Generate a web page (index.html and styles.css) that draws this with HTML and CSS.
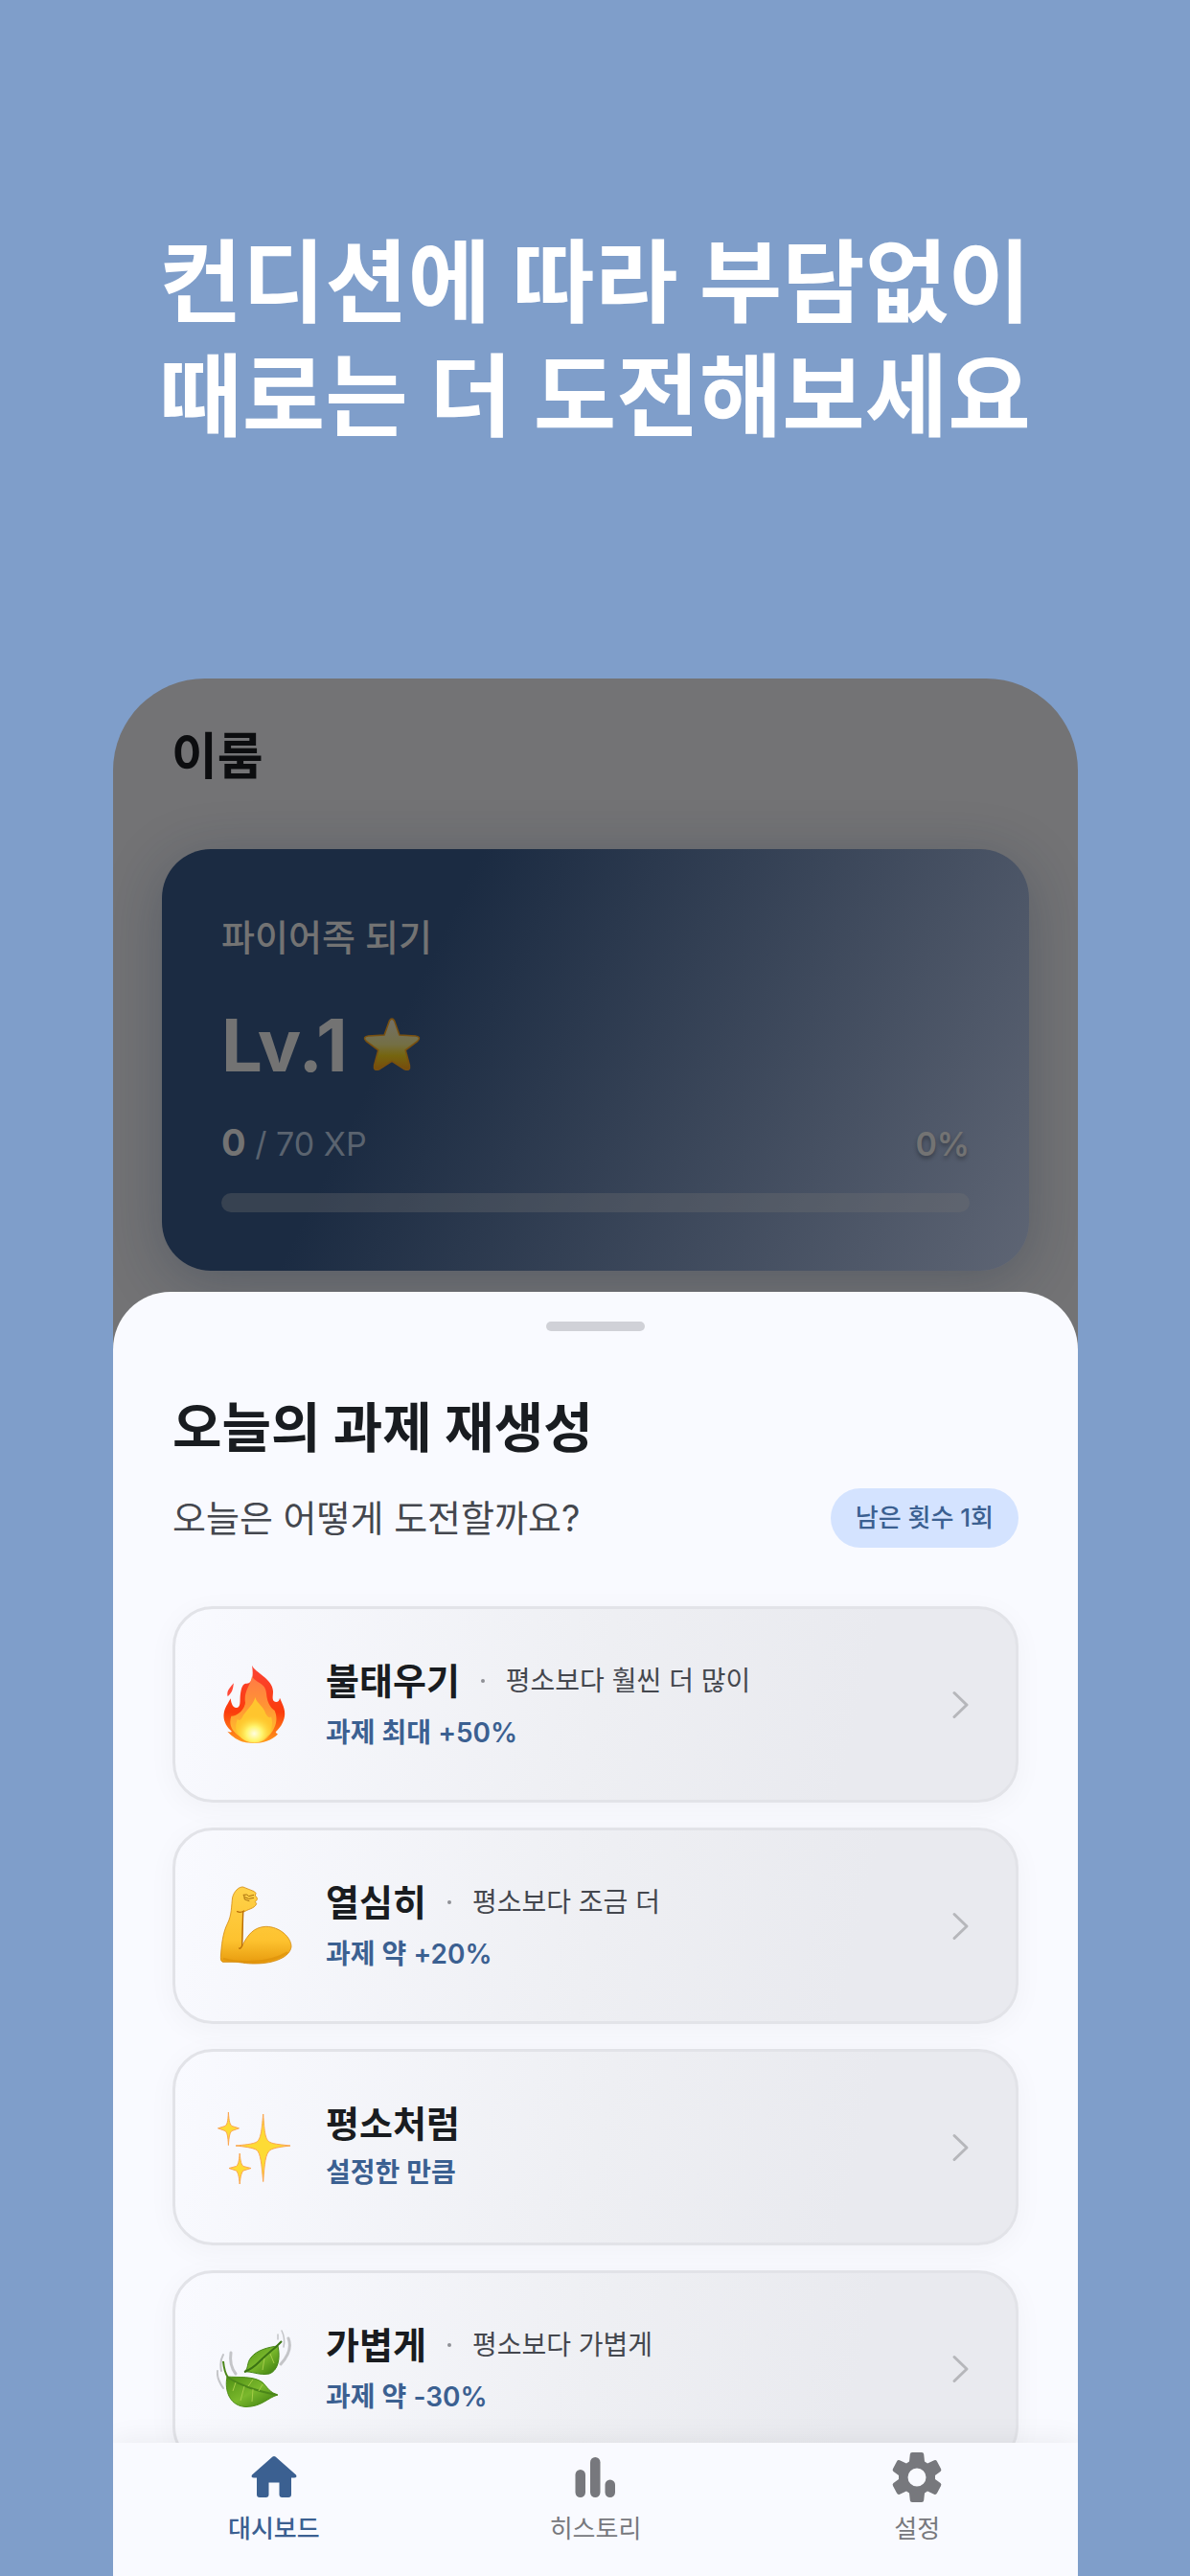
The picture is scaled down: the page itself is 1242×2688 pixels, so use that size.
FILE: index.html
```html
<!DOCTYPE html>
<html lang="ko">
<head>
<meta charset="utf-8">
<meta name="viewport" content="width=device-width, initial-scale=1">
<title>이룸</title>
<link rel="stylesheet" href="styles.css">
</head>
<body>
<main class="page">
  <h1 class="headline">컨디션에 따라 부담없이<br>때로는 더 도전해보세요</h1>

  <div class="phone">
    <section class="dashboard">
      <h2 class="app-name">이룸</h2>
      <article class="level-card">
        <p class="goal">파이어족 되기</p>
        <p class="level">Lv.1
          <svg class="star" viewBox="0 0 57 53" aria-hidden="true">
            <defs><linearGradient id="star" x1="0" y1="0" x2="0" y2="1"><stop offset="0" stop-color="#737068"/><stop offset=".5" stop-color="#746f45"/><stop offset=".72" stop-color="#75650f"/><stop offset="1" stop-color="#774b0c"/></linearGradient></defs>
            <path d="M26 3Q28.500 -1 31 3L36 17L52 18Q58 19 54 23L42 32L46 47Q47 53 41 51L28.500 43L16 51Q10 53 11 47L15 32L3 23Q-1 19 5 18L21 17Z" fill="url(#star)" stroke="#79500f" stroke-width="1.500"/>
          </svg>
        </p>
        <div class="xp-row">
          <p class="xp"><strong>0</strong> / 70 XP</p>
          <p class="percent">0%</p>
        </div>
        <div class="track"></div>
      </article>
    </section>

    <section class="sheet">
      <div class="handle"></div>
      <h2 class="sheet-title">오늘의 과제 재생성</h2>
      <div class="sheet-sub">
        <p class="question">오늘은 어떻게 도전할까요?</p>
        <span class="badge">남은 횟수 1회</span>
      </div>

      <div class="options">
        <button class="option" type="button">
          <svg class="emoji" viewBox="33 43 240 264" aria-hidden="true">
            <defs>
              <linearGradient id="fire" x1="0" y1="0" x2="0" y2="1"><stop offset="0" stop-color="#fb4335"/><stop offset=".6" stop-color="#fb3c0c"/><stop offset="1" stop-color="#ff9a1c"/></linearGradient>
              <linearGradient id="fire-mid" x1="0" y1="0" x2="0" y2="1"><stop offset="0" stop-color="#ff7a45"/><stop offset=".5" stop-color="#ff9633"/><stop offset="1" stop-color="#ffc72c"/></linearGradient>
              <radialGradient id="fire-core" cx=".5" cy=".72" r=".55"><stop offset="0" stop-color="#fffde0"/><stop offset=".4" stop-color="#fff56e"/><stop offset="1" stop-color="#ffd02c" stop-opacity="0"/></radialGradient>
            </defs>
            <path d="M144 51C154 75 208 92 210 132C210 148 206 158 213 164C222 170 230 163 231 153C240 174 249 190 246 211C242 233 231 248 218 260Q221 267 226 266C205 287 178 295 150 295C113 295 88 281 67 258Q76 262 81 259C63 242 53 224 56 202C58 184 68 173 77 155C79 173 85 184 95 184C109 184 106 164 107 149C109 129 112 111 124 108Q133 110 139 103C148 91 147 70 144 51Z" fill="url(#fire)"/>
            <path d="M87 107C84 119 87 132 68 149C64 133 71 125 87 107Z" fill="#ff4938"/>
            <path d="M144 86C155 107 187 105 189 139C191 164 199 182 215 193C228 223 215 249 202 266C174 288 126 291 98 269C76 248 72 232 79 210C96 211 120 193 123 168C117 133 139 116 144 86Z" fill="url(#fire-mid)"/>
            <path d="M154 151C158 170 181 179 187 203C194 216 202 218 204 211C217 253 187 292 151 292C112 292 80 261 99 219C105 229 112 218 116 209C127 191 148 175 154 151Z" fill="#ffc52e"/>
            <ellipse cx="151" cy="242" rx="57" ry="52" fill="url(#fire-core)"/>
          </svg>
          <span class="option-text">
            <span class="option-line has-note"><strong class="option-name">불태우기</strong><i class="dot"></i><span class="note">평소보다 훨씬 더 많이</span></span>
            <span class="amount">과제 최대 +50%</span>
          </span>
          <svg class="chevron" viewBox="0 0 20 32" aria-hidden="true"><path d="M4 3.500L17 16L4 28.500"/></svg>
        </button>

        <button class="option" type="button">
          <svg class="emoji" viewBox="33 735 240 264" aria-hidden="true">
            <defs><linearGradient id="arm" x1="0" y1="0" x2="0" y2="1"><stop offset="0" stop-color="#ffd24a"/><stop offset=".7" stop-color="#fdc22f"/><stop offset="1" stop-color="#e79a0d"/></linearGradient></defs>
            <path d="M83 776C88 758 102 743 116 744L151 758Q160 763 154 771L160 778Q162 785 154 790L158 797C151 813 132 812 116 824L113 929C131 893 150 869 188 868C230 868 267 901 267 931C263 963 215 984 153 984C126 985 102 978 87 979L52 979Q45 976 46 965C48 928 53 886 67 859C81 832 79 804 83 776Z" fill="url(#arm)" stroke="#d58b12" stroke-width="2.500"/>
            <path d="M116 769L128 768L134 773L150 769M121 776L134 781L150 778M119 770L121 783L136 788" fill="none" stroke="#a8700f" stroke-width="3" stroke-linejoin="round"/>
            <path d="M116 824L113 928Q108 939 104 936M98 821Q108 826 119 819" fill="none" stroke="#b86d08" stroke-width="4" stroke-linecap="round"/>
            <path d="M57 969C91 980 193 988 253 950" fill="none" stroke="#d98c08" stroke-width="7" stroke-linecap="round" opacity=".55"/>
          </svg>
          <span class="option-text">
            <span class="option-line has-note"><strong class="option-name">열심히</strong><i class="dot"></i><span class="note">평소보다 조금 더</span></span>
            <span class="amount">과제 약 +20%</span>
          </span>
          <svg class="chevron" viewBox="0 0 20 32" aria-hidden="true"><path d="M4 3.500L17 16L4 28.500"/></svg>
        </button>

        <button class="option" type="button">
          <svg class="emoji" viewBox="0 0 80 88" aria-hidden="true">
            <g fill="#fddb35" stroke="#fba650" stroke-width="1" stroke-linejoin="round">
              <path d="M48.700 9C50 29 51 36 56 38.500C60 40.500 69 41 77 42C69 43 60 44 56 46.500C51 50 50 61 48.700 79.500C47 61 46 50 42 46.500C38 44 29 43 20 42C29 41 38 40.500 42 38C46 35 47 28 48.700 9Z"/>
              <path d="M12.400 7C13 17 14 20 16 21.500L23.500 23.800L16 26.500C14 28 13 32 12.400 41.500C12 32 11 28 9 26.500L1.500 23.800L9 21.500C11 20 12 17 12.400 7Z"/>
              <path d="M24.200 50C25 59 26 62 28 63.500L36 65.500L28 68C26 70 25 74 24.200 82C23.500 74 22.500 70 20.500 68L13 65.500L20.500 63.500C22.500 62 23.500 59 24.200 50Z"/>
            </g>
          </svg>
          <span class="option-text">
            <span class="option-line"><strong class="option-name">평소처럼</strong></span>
            <span class="amount">설정한 만큼</span>
          </span>
          <svg class="chevron" viewBox="0 0 20 32" aria-hidden="true"><path d="M4 3.500L17 16L4 28.500"/></svg>
        </button>

        <button class="option" type="button">
          <svg class="emoji" viewBox="0 0 80 88" aria-hidden="true">
            <defs><linearGradient id="leaf" x1="0" y1="0" x2="1" y2="1"><stop offset="0" stop-color="#4f9014"/><stop offset=".5" stop-color="#7ab82c"/><stop offset="1" stop-color="#37790c"/></linearGradient></defs>
            <g fill="none" stroke="#c4c5c8" stroke-linecap="round">
              <path d="M1 46Q0 54 7 64M7 29Q3 36 5 46" stroke-width="2"/>
              <path d="M15 27Q13 40 20 49" stroke-width="3"/>
              <path d="M75 12Q80 25 67 39" stroke-width="3"/>
              <path d="M68 4Q72 12 70 21M64 8V13" stroke-width="1.500"/>
            </g>
            <path d="M64 20C55 21 42 24 36 32C31 38 34 43 29 47C37 46 44 51 55 49C64 46 67 33 64 20Z" fill="url(#leaf)" stroke="#458617"/>
            <path d="M68 15L62 21Q51 30 44 37T29 47" fill="none" stroke="#3b7314" stroke-width="2"/>
            <path d="M11 52C22 53 39 51 48 58C53 63 56 69 64 71C53 74 48 83 31 83.500C14 83 8 67 11 52Z" fill="url(#leaf)" stroke="#4e8d17"/>
            <path d="M7 36Q8 47 12 53Q31 65 63 71" fill="none" stroke="#4b861a" stroke-width="2"/>
            <path d="M20 58L17 67M29 62L25 77M38 65L37 78M33 62L38 55M44 67L48 60M50 33L48 45M56 28L60 38" fill="none" stroke="#a5cc48" stroke-width="1"/>
          </svg>
          <span class="option-text">
            <span class="option-line has-note"><strong class="option-name">가볍게</strong><i class="dot"></i><span class="note">평소보다 가볍게</span></span>
            <span class="amount">과제 약 -30%</span>
          </span>
          <svg class="chevron" viewBox="0 0 20 32" aria-hidden="true"><path d="M4 3.500L17 16L4 28.500"/></svg>
        </button>
      </div>
    </section>

    <nav class="tabs">
      <a class="tab active" href="#dashboard">
        <svg viewBox="0 0 56 56" aria-hidden="true"><path d="M26.500 6.600Q28 5.400 29.500 6.600L51 25.500Q52.500 28.500 49 28.500H46V46Q46 49 43 49H36.500Q33.500 49 33.500 46V33.500H22.500V46Q22.500 49 19.500 49H13Q10 49 10 46V28.500H7Q3.500 28.500 5 25.500Z"/></svg>
        대시보드
      </a>
      <a class="tab" href="#history">
        <svg viewBox="0 0 56 56" aria-hidden="true"><rect x="7.500" y="20" width="10.500" height="29" rx="5.250"/><rect x="23" y="7" width="10.500" height="42" rx="5.250"/><rect x="38.500" y="30.500" width="10.500" height="18.500" rx="5.250"/></svg>
        히스토리
      </a>
      <a class="tab" href="#settings">
        <svg viewBox="0 0 56 56" aria-hidden="true"><path fill-rule="evenodd" d="M23 2H33Q35 2 35.200 4L36 11.500L39 13.500L46 10.300Q48 9.500 49 11.500L53 19Q54 21 52.500 22L47 26V30L52.500 34Q54 35 53 37L49 44.500Q48 46.500 46 45.700L39 42.500L36 44.500L35.200 52Q35 54 33 54H23Q21 54 20.800 52L20 44.500L17 42.500L10 45.700Q8 46.500 7 44.500L3 37Q2 35 3.500 34L9 30V26L3.500 22Q2 21 3 19L7 11.500Q8 9.500 10 10.300L17 13.500L20 11.500L20.800 4Q21 2 23 2ZM28 18.500A9.500 9.500 0 1 0 28 37.500A9.500 9.500 0 1 0 28 18.500Z"/></svg>
        설정
      </a>
    </nav>
  </div>
</main>
</body>
</html>
```
FILE: styles.css
```css
* {
  box-sizing: border-box;
}

body,
h1,
h2,
p {
  margin: 0;
}

body {
  background: #7f9eca;
  color: #191c20;
  font-family: Inter, "Noto Sans CJK KR", sans-serif;
}

.page {
  height: 100vh;
  min-height: 1600px;
  display: flex;
  flex-direction: column;
}

.headline {
  padding: 236px 0 234px;
  color: #fff;
  font-size: 94px;
  font-weight: 700;
  line-height: 119px;
  text-align: center;
}

.phone {
  flex: 1;
  min-height: 0;
  margin: 0 117px 0 118px;
  display: flex;
  flex-direction: column;
  overflow: hidden;
  border-radius: 96px 96px 0 0;
  background: #737375;
}

/* Dashboard, dimmed behind the sheet */
.dashboard {
  padding: 50px 51px 82px;
}

.app-name {
  padding: 0 10px 64px;
  color: #0c0d0f;
  font-size: 52px;
  font-weight: 700;
  line-height: 64px;
}

.level-card {
  padding: 62px 62px 61px;
  border-radius: 51px;
  background: linear-gradient(116deg, #1b2b42 30%, #5e6574);
  box-shadow: 0 12px 60px rgba(27, 43, 66, 0.3);
  color: #737373;
}

.goal {
  font-size: 38px;
  font-weight: 500;
  line-height: 60px;
}

.level {
  display: flex;
  align-items: center;
  gap: 16px;
  margin-top: 32px;
  font-size: 76px;
  font-weight: 700;
  line-height: 100px;
}

.star {
  width: 60px;
  height: 56px;
}

.xp-row {
  display: flex;
  justify-content: space-between;
  height: 50px;
  margin-top: 28px;
  font-size: 34px;
  line-height: 52px;
}

.xp {
  color: #5a636f;
}

.xp strong {
  color: #737373;
  font-size: 38px;
  line-height: 1;
}

.percent {
  font-weight: 600;
  text-shadow: 0 3px 4px rgba(0, 0, 0, 0.3);
}

.track {
  height: 20px;
  margin-top: 27px;
  border-radius: 10px;
  background: rgba(115, 115, 115, 0.32);
}

/* Bottom sheet */
.sheet {
  flex: 1;
  min-height: 0;
  display: flex;
  flex-direction: column;
  margin-top: -60px;
  padding-top: 31px;
  border-radius: 60px 60px 0 0;
  background: #f9faff;
}

.handle {
  flex: none;
  align-self: center;
  width: 103px;
  height: 10px;
  border-radius: 5px;
  background: #d0d1d7;
}

.sheet-title {
  margin-top: 61px;
  padding: 0 62px;
  font-size: 56px;
  font-weight: 700;
  line-height: 80px;
}

.sheet-sub {
  display: flex;
  align-items: center;
  justify-content: space-between;
  margin-top: 23px;
  padding: 0 62px;
}

.question {
  color: #44474e;
  font-size: 38px;
  line-height: 62px;
}

.badge {
  padding: 0 26px;
  border-radius: 31px;
  background: #d4e3ff;
  color: #3b6091;
  font-size: 26px;
  font-weight: 500;
  line-height: 62px;
}

.options {
  flex: 1;
  min-height: 0;
  display: flex;
  flex-direction: column;
  gap: 26px;
  overflow: hidden;
  padding: 61px 62px 0;
}

.option {
  flex: none;
  display: flex;
  align-items: center;
  min-height: 205px;
  padding: 0 48px 0 43px;
  border: 3px solid #e2e3e8;
  border-radius: 42px;
  background: linear-gradient(103deg, #f9faff, #eeeff3 50%, #e9eaef 80%);
  box-shadow: 0 6px 30px rgba(0, 0, 0, 0.04);
  color: inherit;
  font: inherit;
  text-align: left;
}

.emoji {
  flex: none;
  width: 80px;
  height: 88px;
}

.option-text {
  flex: 1;
  display: flex;
  flex-direction: column;
  margin-left: 34px;
}

.option-line {
  display: flex;
  align-items: center;
  min-height: 52px;
}

.option-line.has-note {
  min-height: 58px;
}

.option-name {
  font-size: 38px;
  font-weight: 700;
  line-height: 52px;
}

.dot {
  width: 4px;
  height: 4px;
  margin: 0 22px;
  border-radius: 50%;
  background: #8f9196;
}

.note {
  color: #44474e;
  font-size: 28px;
  line-height: 48px;
}

.amount {
  color: #3b6091;
  font-size: 28px;
  font-weight: 600;
  line-height: 50px;
}

.chevron {
  width: 20px;
  height: 32px;
  fill: none;
  stroke: #b6b7bb;
  stroke-width: 3;
  stroke-linecap: round;
  stroke-linejoin: round;
}

/* Bottom tabs */
.tabs {
  flex: none;
  display: grid;
  grid-template-columns: repeat(3, 1fr);
  min-height: 139px;
  background: #f9faff;
  box-shadow: 0 0 30px rgba(0, 0, 0, 0.07);
}

.tab {
  display: flex;
  flex-direction: column;
  align-items: center;
  gap: 6px;
  padding-top: 8px;
  color: #77787d;
  font-size: 26px;
  line-height: 40px;
  text-decoration: none;
}

.tab svg {
  width: 56px;
  height: 56px;
  fill: currentColor;
}

.tab.active {
  color: #3b6091;
  font-weight: 500;
}
```
